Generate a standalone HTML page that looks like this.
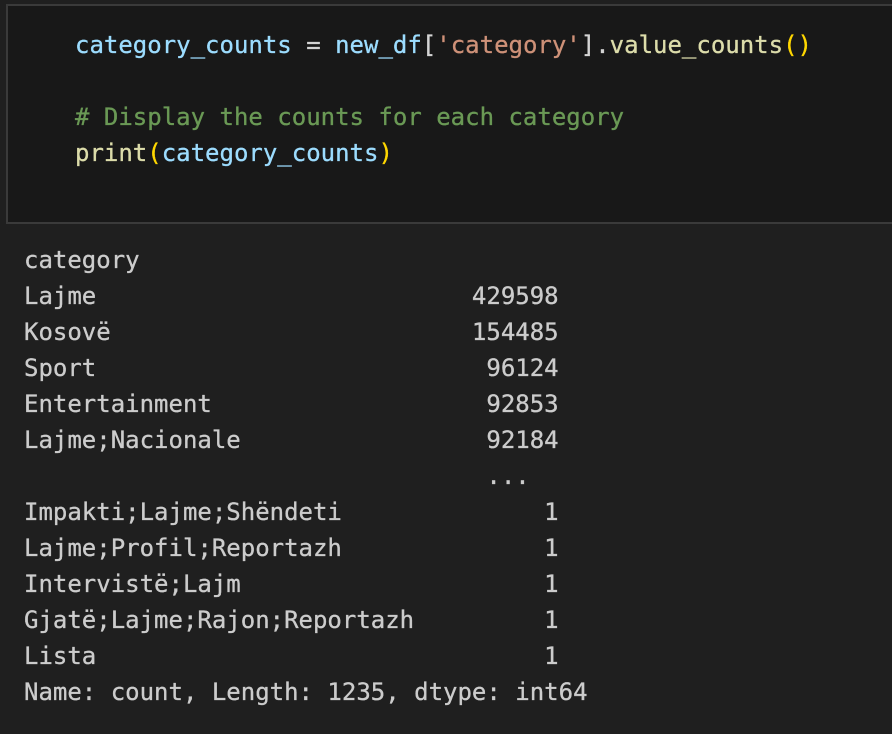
<!DOCTYPE html>
<html><head><meta charset="utf-8"><style>
html,body{margin:0;padding:0;background:#1f1f1f;width:892px;height:734px;overflow:hidden}
.box{position:absolute;left:6px;top:4px;width:900px;height:220px;background:#181818;border:2px solid #3a3a3a;box-sizing:border-box}
pre{margin:0;font-family:"DejaVu Sans Mono","Liberation Mono",monospace;font-size:24px;line-height:36px;white-space:pre;-webkit-text-stroke:0.3px currentColor}
.code{position:absolute;left:75px;top:27px}
.out{position:absolute;left:24px;top:242px;color:#cccccc}
.v{color:#9cdcfe}.s{color:#ce9178}.f{color:#dcdcaa}.c{color:#6a9955}.p{color:#ffd700}.o{color:#d4d4d4}
</style></head><body>
<div class="box"></div>
<pre class="code"><span class="v">category_counts</span><span class="o"> = </span><span class="v">new_df</span><span class="o">[</span><span class="s">'category'</span><span class="o">].</span><span class="f">value_counts</span><span class="p">()</span>

<span class="c"># Display the counts for each category</span>
<span class="f">print</span><span class="p">(</span><span class="v">category_counts</span><span class="p">)</span></pre>
<pre class="out">category
Lajme                          429598
Kosovë                         154485
Sport                           96124
Entertainment                   92853
Lajme;Nacionale                 92184
                                ...  
Impakti;Lajme;Shëndeti              1
Lajme;Profil;Reportazh              1
Intervistë;Lajm                     1
Gjatë;Lajme;Rajon;Reportazh         1
Lista                               1
Name: count, Length: 1235, dtype: int64</pre>
</body></html>
